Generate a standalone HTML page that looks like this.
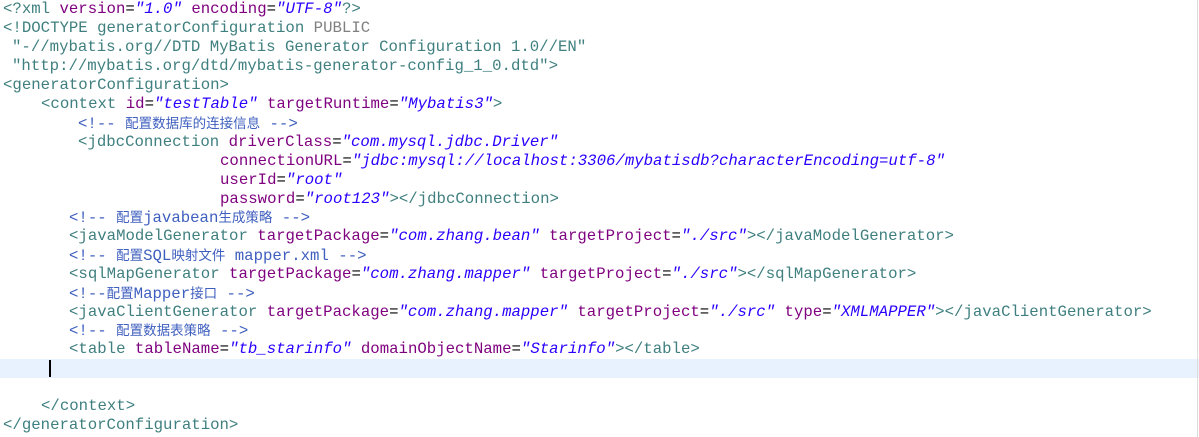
<!DOCTYPE html>
<html><head><meta charset="utf-8"><style>
body{margin:0;width:1199px;height:437px;background:#fff;overflow:hidden;position:relative;font-family:"Liberation Mono",monospace;font-size:15.7px;}
.l{position:absolute;left:0;height:19px;line-height:19px;white-space:pre;}
.t{color:#3f7f7f}.a{color:#7f007f}.v{color:#2a00ff;font-style:italic}.g{color:#808080}.k{color:#000}
.c{color:#3f5fbf}.cj{font-family:"Liberation Sans","Noto Sans CJK SC",sans-serif;font-size:13.5px}
.hl{position:absolute;left:0;top:359px;width:1199px;height:19px;background:#e8f2fe}
.cur{position:absolute;left:49px;top:360px;width:2px;height:17px;background:#000}
.rb{position:absolute;left:1197px;top:0;width:1px;height:437px;background:#ddd}
</style></head><body>
<div class="hl"></div><div class="cur"></div><div class="rb"></div>
<div class="l" style="top:0;left:3px"><span class="t">&lt;?xml </span><span class="a">version</span>=<span class="v">"1.0"</span> <span class="a">encoding</span>=<span class="v">"UTF-8"</span><span class="t">?&gt;</span></div>
<div class="l" style="top:19px;left:3px"><span class="t">&lt;!DOCTYPE generatorConfiguration </span><span class="g">PUBLIC</span></div>
<div class="l t" style="top:38px;left:12px">"-//mybatis.org//DTD MyBatis Generator Configuration 1.0//EN"</div>
<div class="l t" style="top:57px;left:12px">"http://mybatis.org/dtd/mybatis-generator-config_1_0.dtd"&gt;</div>
<div class="l t" style="top:76px;left:3px">&lt;generatorConfiguration&gt;</div>
<div class="l" style="top:95px;left:41px"><span class="t">&lt;context </span><span class="a">id</span>=<span class="v">"testTable"</span> <span class="a">targetRuntime</span>=<span class="v">"Mybatis3"</span><span class="t">&gt;</span></div>
<div class="l c" style="top:114px;left:78px">&lt;!-- <span class="cj">配置数据库的连接信息</span> --&gt;</div>
<div class="l" style="top:133px;left:78px"><span class="t">&lt;jdbcConnection </span><span class="a">driverClass</span>=<span class="v">"com.mysql.jdbc.Driver"</span></div>
<div class="l" style="top:152px;left:220px"><span class="a">connectionURL</span>=<span class="v">"jdbc:mysql://localhost:3306/mybatisdb?characterEncoding=utf-8"</span></div>
<div class="l" style="top:171px;left:220px"><span class="a">userId</span>=<span class="v">"root"</span></div>
<div class="l" style="top:190px;left:220px"><span class="a">password</span>=<span class="v">"root123"</span><span class="t">&gt;&lt;/jdbcConnection&gt;</span></div>
<div class="l c" style="top:208px;left:69px">&lt;!-- <span class="cj">配置</span>javabean<span class="cj">生成策略</span> --&gt;</div>
<div class="l" style="top:227px;left:69px"><span class="t">&lt;javaModelGenerator </span><span class="a">targetPackage</span>=<span class="v">"com.zhang.bean"</span> <span class="a">targetProject</span>=<span class="v">"./src"</span><span class="t">&gt;&lt;/javaModelGenerator&gt;</span></div>
<div class="l c" style="top:246px;left:69px">&lt;!-- <span class="cj">配置</span>SQL<span class="cj">映射文件</span> mapper.xml --&gt;</div>
<div class="l" style="top:265px;left:69px"><span class="t">&lt;sqlMapGenerator </span><span class="a">targetPackage</span>=<span class="v">"com.zhang.mapper"</span> <span class="a">targetProject</span>=<span class="v">"./src"</span><span class="t">&gt;&lt;/sqlMapGenerator&gt;</span></div>
<div class="l c" style="top:284px;left:69px">&lt;!--<span class="cj">配置</span>Mapper<span class="cj">接口</span> --&gt;</div>
<div class="l" style="top:303px;left:69px"><span class="t">&lt;javaClientGenerator </span><span class="a">targetPackage</span>=<span class="v">"com.zhang.mapper"</span> <span class="a">targetProject</span>=<span class="v">"./src"</span> <span class="a">type</span>=<span class="v">"XMLMAPPER"</span><span class="t">&gt;&lt;/javaClientGenerator&gt;</span></div>
<div class="l c" style="top:321px;left:69px">&lt;!-- <span class="cj">配置数据表策略</span> --&gt;</div>
<div class="l" style="top:340px;left:69px"><span class="t">&lt;table </span><span class="a">tableName</span>=<span class="v">"tb_starinfo"</span> <span class="a">domainObjectName</span>=<span class="v">"Starinfo"</span><span class="t">&gt;&lt;/table&gt;</span></div>
<div class="l t" style="top:397px;left:41px">&lt;/context&gt;</div>
<div class="l t" style="top:416px;left:3px">&lt;/generatorConfiguration&gt;</div>
</body></html>
